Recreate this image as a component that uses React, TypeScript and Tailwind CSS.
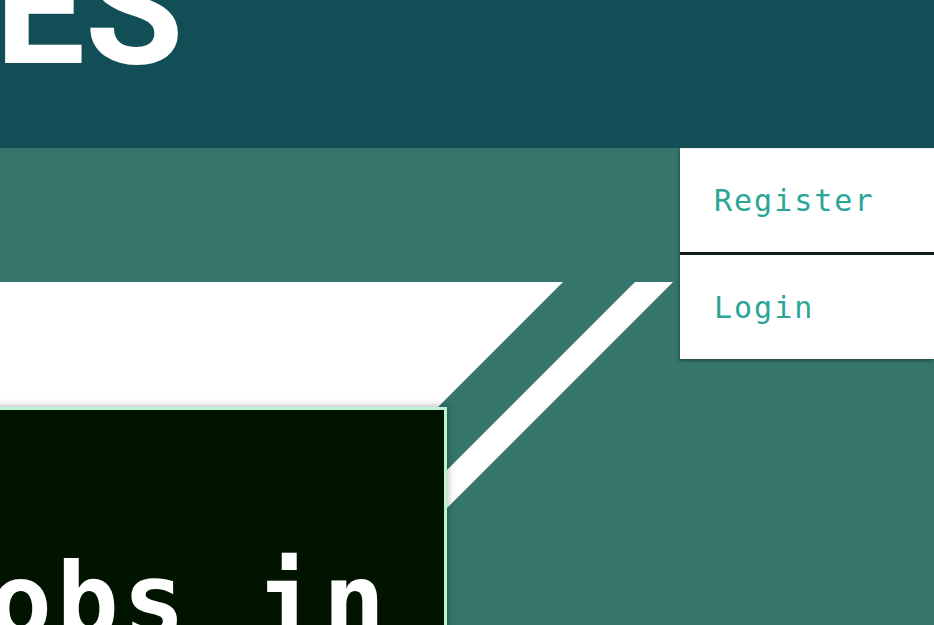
import React from 'react'

const menuItems = ['Register', 'Login']

export default function App() {
  return (
    <div className="relative w-[934px] h-[625px] overflow-hidden bg-[#36756c]">
      {/* Header */}
      <header className="h-[148px] bg-[#124e55] overflow-hidden">
        <h1
          className="mt-[-71px] ml-[-5px] text-[160px] leading-none font-bold text-white whitespace-nowrap"
          style={{ fontFamily: 'Roboto, "Liberation Sans", sans-serif' }}
        >
          ES
        </h1>
      </header>

      <main className="relative h-[477px]">
        {/* Decorative diagonal bands */}
        <svg
          className="absolute inset-0 pointer-events-none"
          width="934"
          height="477"
          viewBox="0 0 934 477"
        >
          <polygon points="0,134 563,134 0,697" fill="#ffffff" />
          <polygon points="635,134 673,134 73,734 35,734" fill="#ffffff" />
        </svg>

        {/* Hero card */}
        <div className="relative pt-[259px]">
          <div className="ml-[-120px] w-[567px] h-[260px] border-[3px] border-[#bdf3d3] bg-[#011400] shadow-[0_0_8px_rgba(0,0,0,0.35)] pl-[40px] pt-[139px]">
            <p
              className="text-[104px] leading-none font-bold text-white whitespace-nowrap tracking-[4px]"
              style={{ fontFamily: '"DejaVu Sans Mono", "Liberation Mono", monospace' }}
            >
              Jobs in
            </p>
          </div>
        </div>

        {/* Account dropdown */}
        <nav className="absolute top-0 right-0 w-[254px] bg-white border-t border-[#eceff0] shadow-[-1px_2px_3px_rgba(0,0,0,0.35)]">
          {menuItems.map((item, i) => (
            <div key={item}>
              {i > 0 && <div className="h-[3px] bg-[#0d1f12]" />}
              <a
                href="#"
                className={`flex items-center pl-[34px] text-[30px] tracking-[2px] text-[#2ba596] ${i === 0 ? 'h-[103px]' : 'h-[104px]'}`}
                style={{ fontFamily: '"DejaVu Sans Mono", "Liberation Mono", monospace' }}
              >
                {item}
              </a>
            </div>
          ))}
        </nav>
      </main>
    </div>
  )
}
